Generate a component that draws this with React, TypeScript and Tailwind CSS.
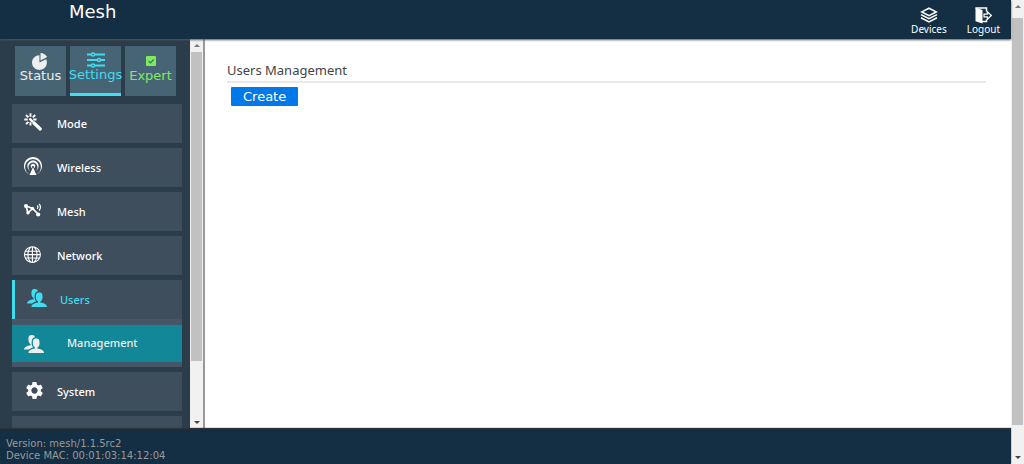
import type { ReactNode } from 'react';
import { ImPieChart, ImPodcast, ImSphere, ImUsers } from 'react-icons/im';
import { MdSettings } from 'react-icons/md';

function SlidersIcon() {
  return (
    <svg viewBox="0 0 18 16" className="h-[16px] w-[18px]" fill="none" stroke="currentColor" strokeWidth="1.8">
      <path d="M0 2.500h4M8 2.500h10M0 8h10M14 8h4M0 13.500h4M8 13.500h10" />
      <circle cx="6" cy="2.500" r="1.600" strokeWidth="1.500" />
      <circle cx="12" cy="8" r="1.600" strokeWidth="1.500" />
      <circle cx="6" cy="13.500" r="1.600" strokeWidth="1.500" />
    </svg>
  );
}

function CheckIcon() {
  return (
    <svg viewBox="0 0 10 10" className="h-[10px] w-[10px]">
      <rect width="10" height="10" rx="1" fill="#7eea63" />
      <path d="M2.500 5l2 2 3.200-3.500" fill="none" stroke="#3f7a52" strokeWidth="1.2" />
    </svg>
  );
}

function WandIcon() {
  return (
    <svg viewBox="0 0 18 18" className="h-[18px] w-[18px]" fill="none" stroke="currentColor">
      <path d="M10 10l6.200 6" strokeWidth="3.200" strokeLinecap="round" />
      <path d="M5.500 5.500l3.500 3.500" strokeWidth="2.400" />
      <path
        d="M6.500 3.700V.3M3.700 6.500H.3M4.400 4.400L2 2M8.800 4.400l2.400-2.400M4.400 8.800L2 11.200M6.500 9.300v3.200M9.300 6.500h3.200"
        strokeWidth="1.900"
      />
    </svg>
  );
}

function MeshIcon() {
  return (
    <svg viewBox="0 0 18 14" className="h-[14px] w-[18px]" fill="none" stroke="currentColor" strokeWidth="1.7">
      <path d="M2 3l2 7 4.500-4.500M2 3l6.500 2.500 6 6" />
      <g fill="currentColor" stroke="none">
        <circle cx="2" cy="3" r="2" />
        <circle cx="4" cy="9.800" r="1.700" />
        <circle cx="8.500" cy="5.500" r="1.700" />
        <circle cx="14.200" cy="11.500" r="2.100" />
      </g>
      <path d="M13.200 2.500q1.500 1.500 0 3.500M15 .8q3 3.300 0 6.700" strokeWidth="1.200" />
    </svg>
  );
}

function LayersIcon() {
  return (
    <svg viewBox="0 0 18 16" className="h-[16px] w-[18px]" fill="none" stroke="currentColor" strokeWidth="1.600">
      <path d="M9 1.200l7.200 3.700L9 8.600 1.800 4.900z" />
      <path d="M1 7.600l8 4.100 8-4.100M1 10.800l8 4.100 8-4.100" />
    </svg>
  );
}

function ExitIcon() {
  return (
    <svg viewBox="0 0 17 17" className="h-[17px] w-[17px]">
      <path d="M.5.500L7.500 3v13.500l-7-2.300z" fill="currentColor" />
      <path d="M.5 1h11v3.500M11.500 12.500v2H7" fill="none" stroke="currentColor" strokeWidth="1.500" />
      <path d="M9 7.200h3.300V4.700l4 3.800-4 3.800V9.800H9z" fill="none" stroke="currentColor" strokeWidth="1.200" />
    </svg>
  );
}

function ScrollBar({ thumb }: { thumb: string }) {
  return (
    <div aria-hidden="true" className="flex w-[13px] shrink-0 flex-col items-center bg-[#f1f1f1]">
      <div className="flex h-[13px] items-center">
        <svg viewBox="0 0 6 3" className="h-[3px] w-[6px]"><path d="M0 3l3-3 3 3z" fill="#777" /></svg>
      </div>
      <div className="w-full min-h-0 flex-1 px-px">
        <div className={`w-full bg-[#c1c1c1] ${thumb}`} />
      </div>
      <div className="flex h-[13px] items-center">
        <svg viewBox="0 0 6 3" className="h-[3px] w-[6px]"><path d="M0 0l3 3 3-3z" fill="#444" /></svg>
      </div>
    </div>
  );
}

function Tab({ icon, label, tone }: { icon: ReactNode; label: string; tone: string }) {
  return (
    <button type="button" className={`flex h-[50px] w-[51px] flex-col items-center bg-[#476475] text-[13px] leading-[14px] ${tone}`}>
      <span className="flex h-[16px] items-center justify-center">{icon}</span>
      {label}
    </button>
  );
}

function MenuItem({ icon, label, active = false }: { icon: ReactNode; label: string; active?: boolean }) {
  return (
    <a
      href="#"
      className={`flex h-[39px] shrink-0 items-center bg-[#3f4e5c] pt-px ${active ? 'border-l-[3px] border-[#40dcf0] text-[#40dcf0]' : 'text-white'}`}
    >
      <span className="flex w-[45px] pb-1 pl-3 text-[18px]">{icon}</span>
      {label}
    </a>
  );
}

export default function App() {
  return (
    <div className="flex h-screen bg-white font-['DejaVu_Sans',sans-serif]">
      <div className="flex min-w-0 flex-1 flex-col">
        <header className="z-10 flex h-[39px] shrink-0 justify-between bg-[#142f43] pr-[11px] pl-[69px] text-white shadow-[0_1px_2px_#555]">
          <h1 className="text-[18px] leading-6">Mesh</h1>
          <nav className="flex gap-5 pt-[7px] font-['Noto_Sans',sans-serif] text-[10px] leading-3">
            <a href="#" className="flex flex-col items-center">
              <LayersIcon />
              Devices
            </a>
            <a href="#" className="flex flex-col items-center">
              <span className="flex h-[16px] items-center"><ExitIcon /></span>
              Logout
            </a>
          </nav>
        </header>

        <div className="flex min-h-0 flex-1">
          <aside className="flex w-[205px] shrink-0 border-r-2 border-[#999] bg-[#2b3c4a]">
            <div className="flex min-w-0 flex-1 flex-col overflow-hidden pt-[7px] pr-2 pl-3">
              <div className="flex gap-1 pb-2 pl-[3px]">
                <Tab icon={<ImPieChart className="h-[17px] w-[17px]" />} label="Status" tone="pt-[7px] text-[#eee]" />
                <Tab icon={<SlidersIcon />} label="Settings" tone="border-b-[3px] border-[#40dcf0] pt-[6px] text-[#40dcf0]" />
                <Tab icon={<CheckIcon />} label="Expert" tone="pt-[7px] text-[#7eea63]" />
              </div>
              <nav className="flex flex-col gap-[5px] font-['Noto_Sans',sans-serif] text-[11px] font-medium">
                <MenuItem icon={<WandIcon />} label="Mode" />
                <MenuItem icon={<ImPodcast />} label="Wireless" />
                <MenuItem icon={<MeshIcon />} label="Mesh" />
                <MenuItem icon={<ImSphere />} label="Network" />
                <div className="flex flex-col bg-[#475569] pb-[5px]">
                  <MenuItem icon={<ImUsers className="h-[20px] w-[20px]" />} label="Users" active />
                  <a href="#" className="mt-[6px] flex h-[37px] items-center bg-[#128797] text-[#eee]">
                    <span className="w-[55px] pl-3"><ImUsers className="h-[20px] w-[20px]" /></span>
                    Management
                  </a>
                </div>
                <MenuItem icon={<MdSettings className="h-[21px] w-[21px]" />} label="System" />
                <MenuItem icon={null} label="" />
              </nav>
            </div>
            <ScrollBar thumb="h-[85%]" />
          </aside>

          <main className="min-w-0 flex-1 bg-white pt-[21px] pr-[25px] pl-[22px]">
            <h2 className="border-b-2 border-[#e9e9e9] pb-px font-['Noto_Sans',sans-serif] text-[13px] leading-5 text-[#444]">
              Users Management
            </h2>
            <button type="button" className="mt-1 ml-1 h-[19px] rounded-[1px] bg-[#0078e7] px-3 text-[13px] leading-[19px] text-white">
              Create
            </button>
          </main>
        </div>

        <footer className="z-10 h-[35px] shrink-0 bg-[#142f43] px-[6px] pt-[9px] text-[10px] leading-3 text-[#999] shadow-[0_-1px_1px_#333]">
          <p>Version: mesh/1.1.5rc2</p>
          <p>Device MAC: 00:01:03:14:12:04</p>
        </footer>
      </div>
      <ScrollBar thumb="mt-[5px] h-[93%]" />
    </div>
  );
}
